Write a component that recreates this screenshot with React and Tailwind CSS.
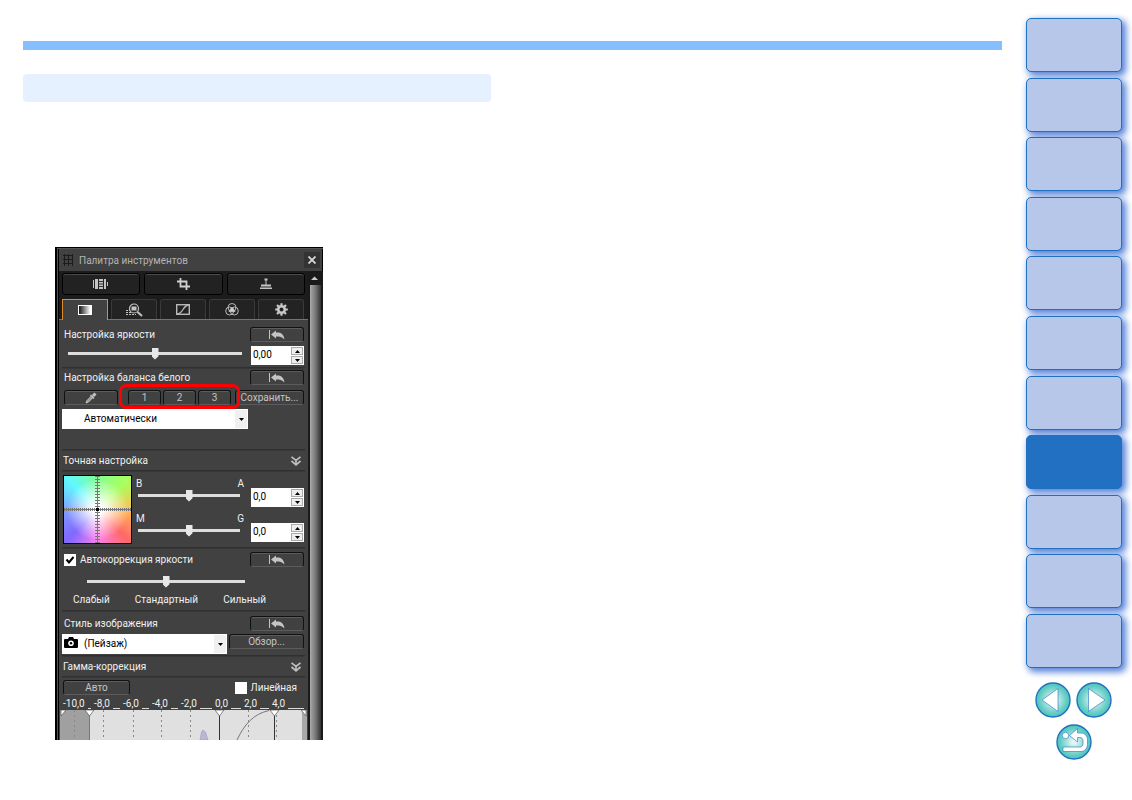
import { useState } from 'react';
import clsx from 'clsx';

const chapters = Array.from({ length: 11 }, (_, i) => i + 1);
const ACTIVE_CHAPTER = 8;

const scale = ['-10,0', '-8,0', '-6,0', '-4,0', '-2,0', '0,0', '2,0', '4,0'];

function PanelButton({ className, children, ...props }) {
  return (
    <button
      type="button"
      className={clsx(
        'flex h-[15px] items-center justify-center rounded-[3px] border border-[#111] border-b-[#5c5c5c] bg-[#414141] whitespace-nowrap text-[#c4c4c4] inset-shadow-[0_1px_0_#5c5c5c]',
        className
      )}
      {...props}
    >
      {children}
    </button>
  );
}

function ResetButton({ label }) {
  return (
    <PanelButton className="w-[54px] shrink-0" aria-label={label}>
      <svg width="16" height="10" viewBox="0 0 16 10" fill="#c4c4c4">
        <rect x="0" y="0" width="1" height="9" />
        <path d="M2 4.5 L7 0.5 V2.5 H10 C13 3 15 5.5 15.5 9.5 C13 7 11 6.5 7 6.5 V8.5 Z" />
      </svg>
    </PanelButton>
  );
}

function Slider({ label, className }) {
  return (
    <input
      type="range"
      aria-label={label}
      defaultValue={50}
      className={clsx(
        'block h-3 appearance-none bg-transparent [&::-webkit-slider-runnable-track]:h-[3px] [&::-webkit-slider-runnable-track]:bg-[#dedede] [&::-webkit-slider-thumb]:-mt-1 [&::-webkit-slider-thumb]:h-3 [&::-webkit-slider-thumb]:w-[7px] [&::-webkit-slider-thumb]:appearance-none [&::-webkit-slider-thumb]:bg-[#e8e8e8] [&::-webkit-slider-thumb]:[clip-path:polygon(0_0,100%_0,100%_72%,50%_100%,0_72%)]',
        className
      )}
    />
  );
}

function Spinner({ label, initial }) {
  const [value, setValue] = useState(initial);
  return (
    <div className="flex h-[19px] w-[53px] shrink-0 bg-white p-px">
      <input
        type="text"
        aria-label={label}
        value={value}
        onChange={(e) => setValue(e.target.value)}
        className="w-0 flex-1 pl-px pb-0.5 text-black outline-none"
      />
      <div className="flex w-3 flex-col gap-px">
        <button type="button" aria-label="Больше" className="flex flex-1 items-center justify-center border border-[#aaa] bg-[#eee]">
          <svg width="5" height="3" viewBox="0 0 5 3"><path d="M0 3 L2.5 0 L5 3Z" /></svg>
        </button>
        <button type="button" aria-label="Меньше" className="flex flex-1 items-center justify-center border border-[#aaa] bg-[#eee]">
          <svg width="5" height="3" viewBox="0 0 5 3"><path d="M0 0 L2.5 3 L5 0Z" /></svg>
        </button>
      </div>
    </div>
  );
}

function PanelSelect({ label, option, className, selectClass, icon }) {
  return (
    <div className={clsx('relative h-5 shrink-0 bg-white', className)}>
      <select aria-label={label} className={clsx('block h-full w-full appearance-none text-black outline-none', selectClass)}>
        <option>{option}</option>
      </select>
      {icon}
      <span className="pointer-events-none absolute top-px right-px bottom-px flex w-3 items-center justify-center bg-[#f0f0f0]">
        <svg width="5" height="3" viewBox="0 0 5 3"><path d="M0 0 L2.5 3 L5 0Z" /></svg>
      </span>
    </div>
  );
}

function Separator() {
  return <div className="mx-[3px] h-0.5 border-b border-[#383838] bg-[#303030]" />;
}

function Chevrons() {
  return (
    <svg width="10" height="10" viewBox="0 0 10 10" fill="none" stroke="#bdbdbd" strokeWidth="1.7">
      <path d="M0.5 0.8 L5 4.5 L9.5 0.8 M0.5 5 L5 8.8 L9.5 5 M5 4 V8" />
    </svg>
  );
}

function FoldHeader({ title }) {
  return (
    <button type="button" className="flex h-[19px] w-full items-center justify-between pt-px pr-[7px] pl-1">
      {title}
      <Chevrons />
    </button>
  );
}

function ToolButtons() {
  const tool = 'flex h-[22px] flex-1 items-center justify-center rounded-[3px] border border-black bg-[#222] inset-shadow-[0_1px_0_#4a4a4a]';
  return (
    <div className="flex gap-1 px-[3px] pt-0.5">
      <button type="button" aria-label="Миниатюры" className={tool}>
        <svg width="16" height="10" viewBox="0 0 16 10" fill="#c4c4c4">
          <path d="M0 1h1v8H0z M2 0h3v10H2z M6 0h4v10H6z M11 0h2v10h-2z M14 3h1v4h-1z" />
          <path d="M6 2.5h4 M6 5h4 M6 7.5h4" stroke="#333" />
        </svg>
      </button>
      <button type="button" aria-label="Обрезка" className={tool}>
        <svg width="13" height="12" viewBox="0 0 13 12" fill="none" stroke="#d0d0d0" strokeWidth="1.8">
          <path d="M3.5 0 V8.5 H13 M0 3.5 H9.5 V12" />
        </svg>
      </button>
      <button type="button" aria-label="Штамп" className={tool}>
        <svg width="12" height="12" viewBox="0 0 12 12" fill="#c4c4c4">
          <path d="M4.5 0.5h3v2h-1v4h-1V2.5h-1z M1 6.5h10v2H1z M0 9.5h12v1.5H0z" />
        </svg>
      </button>
    </div>
  );
}

function TabBar() {
  const tab = 'flex w-[46px] items-center justify-center rounded-t-[3px] border border-[#3a3a3a] border-b-0 bg-[#232323]';
  return (
    <div role="tablist" className="mt-1 flex h-[21px] border-b border-[#a86a20] pl-[3px]">
      <button type="button" role="tab" aria-selected="true" aria-label="Яркость" className="-mb-px flex w-[47px] items-center justify-center border border-b-0 border-[#e08a28] bg-[#414141]">
        <svg width="14" height="10" viewBox="0 0 14 10">
          <defs>
            <linearGradient id="tone">
              <stop offset="0.1" stopColor="#222" />
              <stop offset="0.9" stopColor="#fff" />
            </linearGradient>
          </defs>
          <rect x="0.5" y="0.5" width="13" height="9" fill="url(#tone)" stroke="#fff" />
        </svg>
      </button>
      <div className="ml-[3px] flex flex-1 gap-[3px] pr-1">
        <button type="button" role="tab" aria-label="Детали" className={tab}>
          <svg width="17" height="14" viewBox="0 0 17 14" fill="none" stroke="#c4c4c4">
            <circle cx="8" cy="5.5" r="4.5" strokeWidth="1.2" />
            <path d="M5.5 3.5h5v4h-5z" fill="#c4c4c4" stroke="none" />
            <path d="M11.5 9 L16 13" strokeWidth="2" />
            <path d="M0 7.5h4 M0 9.5h5 M0 11.5h10" strokeDasharray="2 1" />
          </svg>
        </button>
        <button type="button" role="tab" aria-label="Кривая" className={tab}>
          <svg width="14" height="11" viewBox="0 0 14 11" fill="none" stroke="#b8b8b8">
            <rect x="0.7" y="0.7" width="12.6" height="9.6" strokeWidth="1.4" />
            <path d="M1 10 C8 9.5 6 1.5 13 1" strokeWidth="1.3" />
          </svg>
        </button>
        <button type="button" role="tab" aria-label="Цвет" className={tab}>
          <svg width="14" height="13" viewBox="0 0 14 13" fill="none" stroke="#b8b8b8">
            <circle cx="7" cy="4.5" r="4" />
            <circle cx="4.7" cy="8" r="4" />
            <circle cx="9.3" cy="8" r="4" />
            <path d="M7 4 L10 8.5 H4 Z" fill="#d0d0d0" />
          </svg>
        </button>
        <button type="button" role="tab" aria-label="Параметры" className={tab}>
          <svg width="13" height="13" viewBox="-6.5 -6.5 13 13" fill="none" stroke="#c8c8c8">
            <circle r="3.3" strokeWidth="2.6" />
            <path d="M0 -6.3V-4 M0 6.3V4 M-6.3 0H-4 M6.3 0H4 M-4.5 -4.5L-3 -3 M4.5 4.5L3 3 M-4.5 4.5L-3 3 M4.5 -4.5L3 -3" strokeWidth="2.2" />
          </svg>
        </button>
      </div>
    </div>
  );
}

function ColorField() {
  return (
    <div className="h-[69px] w-[69px] shrink-0 border border-black bg-[radial-gradient(circle_at_center,#fff_10%,transparent_65%),conic-gradient(from_45deg,#a8ff60,#ffc050_45deg,#ff6868_90deg,#ff80f0_135deg,#8068ff_180deg,#80a0ff_225deg,#60f8ff_270deg,#80ff90_315deg,#a8ff60)]">
      <svg width="67" height="67" viewBox="0 0 67 67" stroke="#777" className="block">
        <path d="M33.5 0V67 M0 33.5H67" />
        <path d="M33.5 0V67" strokeWidth="5" strokeDasharray="1 2" />
        <path d="M0 33.5H67" strokeWidth="3" strokeDasharray="1 1" />
        <rect x="32" y="32" width="3" height="3" fill="#000" stroke="none" />
      </svg>
    </div>
  );
}

function Histogram() {
  return (
    <svg width="247" height="30" viewBox="0 0 247 30" className="block">
      <rect width="247" height="30" fill="#e0e0e0" />
      <rect width="29" height="30" fill="#a0a0a0" />
      <rect x="242" width="5" height="30" fill="#a8a8a8" />
      <path d="M29.5 0V30" stroke="#777" />
      <path d="M14.5 0V30 M43.5 0V30 M73.5 0V30 M101.5 0V30 M130.5 0V30 M188.5 0V30 M216.5 0V30" stroke="#888" strokeDasharray="2 3" />
      <path d="M140 30 L141.5 22 L143 20 L145.5 22 L148 30Z" fill="#b8b8d4" stroke="#9a9abc" strokeWidth="0.6" />
      <path d="M177 30 C184 15 193 4 209 0.5" fill="none" stroke="#777" />
      <path d="M159.5 0V30 M214.5 0V30" stroke="#333" />
      <g fill="#fff" stroke="#555" strokeWidth="0.7">
        <path d="M25 0H34L29.5 6Z M155 0H164L159.5 6Z M210 0H219L214.5 6Z M1 0H6L1 6Z M241 0H246V6Z" />
      </g>
    </svg>
  );
}

function ToolPalette() {
  return (
    <section className="ml-8 w-[268px] bg-black pt-px pl-0.5 font-[Roboto,'Noto_Sans',sans-serif] text-[10px] leading-3 text-[#f0f0f0]">
      <div className="border-t border-l border-[#555] pl-px">
        {/* Title bar */}
        <header className="mr-px flex h-[22px] items-center bg-[#414141] pr-0.5 pl-1">
          <svg width="10" height="12" viewBox="0 0 10 12" stroke="#1c1c1c" className="mr-1.5">
            <path d="M1.5 0V12 M5.5 0V12 M9.5 0V12 M0 1.5H10 M0 5.5H10 M0 9.5H10" />
          </svg>
          <h2 className="flex-1 pt-0.5 text-[#b4b4b4]">Палитра инструментов</h2>
          <button type="button" aria-label="Закрыть" className="flex h-4 w-4 items-center justify-center bg-[#333]">
            <svg width="8" height="8" viewBox="0 0 8 8" stroke="#d8d8d8" strokeWidth="1.8">
              <path d="M0.5 0.5L7.5 7.5 M7.5 0.5L0.5 7.5" />
            </svg>
          </button>
        </header>

        <div className="flex">
          <div className="min-w-0 flex-1 bg-[#1c1c1c]">
            <ToolButtons />
            <TabBar />

            <div className="bg-[#414141]">
              {/* Brightness */}
              <div className="pt-[7px] pr-1 pb-0.5 pl-[5px]">
                <div className="flex items-center justify-between">
                  <span>Настройка яркости</span>
                  <ResetButton label="Сбросить яркость" />
                </div>
                <div className="mt-1 flex items-start justify-between pl-1">
                  <Slider label="Настройка яркости" className="mt-px w-[174px]" />
                  <Spinner label="Значение яркости" initial="0,00" />
                </div>
              </div>
              <Separator />

              {/* White balance */}
              <div className="h-20 pt-px pr-1 pl-[5px]">
                <div className="flex items-center justify-between">
                  <span>Настройка баланса белого</span>
                  <ResetButton label="Сбросить баланс белого" />
                </div>
                <div className="relative mt-[5px] flex">
                  <PanelButton className="w-[54px]" aria-label="Пипетка">
                    <svg width="12" height="12" viewBox="0 0 12 12" stroke="#c4c4c4" fill="none">
                      <path d="M1 11 L2 8.5 L6.5 4 L8 5.5 L3.5 10 Z" fill="#999" />
                      <path d="M5.5 3 L9 6.5" strokeWidth="1.5" />
                      <path d="M8 4 L10.5 1.5" strokeWidth="3" />
                    </svg>
                  </PanelButton>
                  <div className="ml-[10px] flex gap-0.5">
                    <PanelButton className="w-[33px]">1</PanelButton>
                    <PanelButton className="w-[33px]">2</PanelButton>
                    <PanelButton className="w-[33px]">3</PanelButton>
                  </div>
                  <PanelButton className="ml-1 flex-1">Сохранить...</PanelButton>
                  <div className="pointer-events-none absolute -top-[6px] left-[55px] h-[25px] w-[121px] rounded-[7px] border-3 border-[#ff0000]" />
                </div>
                <PanelSelect label="Баланс белого" option="Автоматически" className="mt-1 -ml-0.5 w-[186px]" selectClass="pl-[22px]" />
              </div>
              <Separator />

              {/* Fine tuning */}
              <FoldHeader title="Точная настройка" />
              <Separator />
              <div className="flex h-[75px] pt-[3px] pr-1 pl-1">
                <ColorField />
                <div className="ml-1 flex w-[108px] flex-col pt-1 leading-[10px]">
                  <div className="flex justify-between"><span>B</span><span>A</span></div>
                  <Slider label="Синий — янтарный" className="ml-0.5 w-[102px]" />
                  <div className="mt-[13px] flex justify-between"><span>M</span><span>G</span></div>
                  <Slider label="Пурпурный — зелёный" className="ml-0.5 w-[102px]" />
                </div>
                <div className="ml-auto flex flex-col gap-4 pt-[13px]">
                  <Spinner label="B/A" initial="0,0" />
                  <Spinner label="M/G" initial="0,0" />
                </div>
              </div>
              <Separator />

              {/* Auto lighting optimizer */}
              <div className="h-[61px] pt-[3px] pr-1 pl-[5px]">
                <div className="flex items-center justify-between">
                  <label className="flex items-center gap-1">
                    <span className="relative flex h-3 w-3">
                      <input type="checkbox" defaultChecked className="peer h-3 w-3 appearance-none bg-white" />
                      <svg width="12" height="12" viewBox="0 0 12 12" fill="none" stroke="#000" strokeWidth="2" className="pointer-events-none absolute inset-0 hidden peer-checked:block">
                        <path d="M2.5 5.5L5 8.5L9.5 3" />
                      </svg>
                    </span>
                    Автокоррекция яркости
                  </label>
                  <ResetButton label="Сбросить автокоррекцию" />
                </div>
                <Slider label="Автокоррекция яркости" className="mt-2 ml-[23px] w-[158px]" />
                <div className="mt-[7px] flex w-[202px] justify-between pl-[9px]">
                  <span>Слабый</span>
                  <span>Стандартный</span>
                  <span>Сильный</span>
                </div>
              </div>
              <Separator />

              {/* Picture style */}
              <div className="h-[43px] pt-1 pr-1 pl-[5px]">
                <div className="flex items-center justify-between">
                  <span>Стиль изображения</span>
                  <ResetButton label="Сбросить стиль" />
                </div>
                <div className="mt-[3px] -ml-0.5 flex gap-0.5">
                  <PanelSelect
                    label="Стиль изображения"
                    option="(Пейзаж)"
                    className="w-[165px]"
                    selectClass="pl-[22px]"
                    icon={
                      <svg width="14" height="12" viewBox="0 0 14 12" className="pointer-events-none absolute top-[3px] left-0.5">
                        <path d="M1 2H4L5 0H9L10 2H13Q14 2 14 3V10Q14 11 13 11H1Q0 11 0 10V3Q0 2 1 2Z" />
                        <circle cx="7" cy="6.2" r="2.8" fill="#fff" />
                        <circle cx="7" cy="6.2" r="1.2" />
                      </svg>
                    }
                  />
                  <PanelButton className="flex-1">Обзор...</PanelButton>
                </div>
              </div>
              <Separator />

              {/* Gamma */}
              <FoldHeader title="Гамма-коррекция" />
              <Separator />
              <div className="flex items-center justify-between pt-0.5 pr-[11px] pl-1">
                <PanelButton className="w-[67px]">Авто</PanelButton>
                <label className="flex items-center gap-1">
                  <input type="checkbox" className="h-3 w-3 appearance-none bg-white" />
                  Линейная
                </label>
              </div>
              <div className="grid h-[15px] grid-cols-[31px_29px_29px_29px_34px_29px_28px_1fr] items-end pr-px pl-1">
                {scale.map((tick) => (
                  <div key={tick} className="flex items-end gap-[3px] pr-[3px]">
                    {tick}
                    <span className="mb-px h-px flex-1 bg-[#ddd]" />
                  </div>
                ))}
              </div>
              <div className="pl-px">
                <Histogram />
              </div>
            </div>
          </div>

          {/* Scrollbar */}
          <div className="flex w-[15px] flex-col items-start bg-[#1a1a1a] pt-[3px] pl-0.5">
            <svg width="9" height="9" viewBox="0 0 9 9" className="mb-0.5" fill="#ccc">
              <path d="M1 6L4.5 2.5L8 6Z" />
            </svg>
            <div className="w-[11px] flex-1 bg-linear-to-r from-[#aaa] via-[#777] to-[#333]" />
          </div>
        </div>
      </div>
    </section>
  );
}

function RoundButton({ label, children }) {
  return (
    <a href="#" aria-label={label}>
      <svg width="36" height="36" viewBox="0 0 36 36" className="block">
        <defs>
          <radialGradient id="aqua">
            <stop offset="0.1" stopColor="#e4f6f4" />
            <stop offset="0.8" stopColor="#62ccc4" />
            <stop offset="1" stopColor="#4cc4bc" />
          </radialGradient>
        </defs>
        <circle cx="18" cy="18" r="17" fill="url(#aqua)" stroke="#2270c2" strokeWidth="1.4" />
        <g fill="#fff" stroke="#2270c2" strokeWidth="0.6">{children}</g>
      </svg>
    </a>
  );
}

function ChapterNav() {
  return (
    <nav className="w-24 shrink-0">
      <div className="flex h-[650px] flex-col justify-between">
        {chapters.map((n) => (
          <a
            key={n}
            href="#"
            aria-label={`Глава ${n}`}
            className={clsx(
              'h-[54px] rounded-[5px] border border-[#2070c0] shadow-[3px_3px_7px_1px_#5580d8]',
              n === ACTIVE_CHAPTER ? 'bg-[#2270c2]' : 'bg-[#b7c7e9]'
            )}
          />
        ))}
      </div>
      <div className="mt-[14px] mr-px flex flex-wrap justify-center gap-x-[5px] gap-y-[6px]">
        <RoundButton label="Назад">
          <path d="M7 18L23 6.5V29.5Z" />
        </RoundButton>
        <RoundButton label="Вперёд">
          <path d="M29 18L12.5 6.5V29.5Z" />
        </RoundButton>
        <RoundButton label="Вернуться">
          <circle cx="9.5" cy="11.5" r="3.2" />
          <path d="M13.5 11.5L21.5 4.5V9H25C29 9 31.5 12 31.5 16V20C31.5 24 29 27.5 25 27.5H7V23H24C26 23 27 21.5 27 19.5V17C27 15 26 13.5 24 13.5H21.5V18Z" />
        </RoundButton>
      </div>
    </nav>
  );
}

export default function App() {
  return (
    <div className="flex gap-6 overflow-hidden bg-white pt-[18px] pr-[10px] pb-10 pl-[23px]">
      <main className="min-w-0 flex-1 pt-[23px]">
        <div className="h-[9px] bg-[#85bfff]" />
        <div className="mt-6 h-7 max-w-[468px] rounded bg-[#e5f1ff]" />
        <div className="pt-[145px]">
          <ToolPalette />
        </div>
      </main>
      <ChapterNav />
    </div>
  );
}
